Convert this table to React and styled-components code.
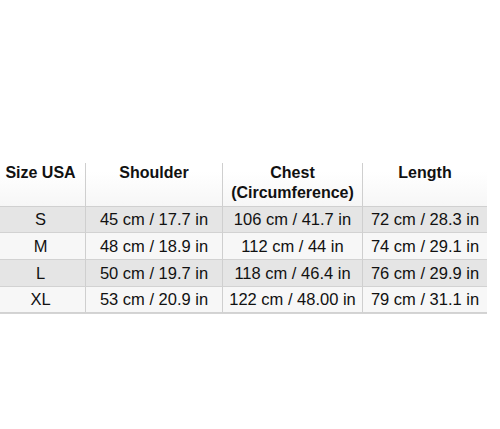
import React from 'react'
import styled, { createGlobalStyle } from 'styled-components'

const Global = createGlobalStyle`
body{
  margin: 0;
  background: #fff;
  font-family: "Liberation Sans", Arial, sans-serif;
}
`

const Page = styled.div`
width: 500px;
height: 429px;
overflow: hidden;
background: #fff;
padding-top: 163px;
box-sizing: border-box;
`

const Table = styled.div`
display: grid;
grid-template-columns: 89px 137px 140px 125px;
margin-left: -4px;
color: #111;
border-bottom: 1px solid #d4d4d4;
width: 491px;
`

const Head = styled.div`
height: 44px;
box-sizing: border-box;
text-align: center;
font-weight: bold;
font-size: 16px;
line-height: 20px;
background: linear-gradient(#fff 20%, #f6f6f6);
border-left: ${p => (p.first ? 'none' : '1px solid #cfcfcf')};
border-bottom: 1px solid #d0d0d0;
`

const Cell = styled.div`
height: ${p => p.h}px;
box-sizing: border-box;
display: flex;
align-items: center;
justify-content: center;
font-size: 16.5px;
white-space: nowrap;
background: ${p => (p.shade ? '#e5e5e5' : '#f7f7f7')};
border-left: ${p => (p.first ? 'none' : '1px solid #cfcfcf')};
border-bottom: 1px solid #d2d2d2;
`

const heads = ['Size USA', 'Shoulder', 'Chest\n(Circumference)', 'Length']

const rows = [
  ['S', '45 cm / 17.7 in', '106 cm / 41.7 in', '72 cm / 28.3 in'],
  ['M', '48 cm / 18.9 in', '112 cm / 44 in', '74 cm / 29.1 in'],
  ['L', '50 cm / 19.7 in', '118 cm / 46.4 in', '76 cm / 29.9 in'],
  ['XL', '53 cm / 20.9 in', '122 cm / 48.00 in', '79 cm / 31.1 in'],
]

const heights = [26, 27, 27, 26]

export default function App() {
  return (
    <Page>
      <Global />
      <Table>
        {heads.map((h, i) => (
          <Head key={h} first={i === 0}>
            {h.split('\n').map(t => <div key={t}>{t}</div>)}
          </Head>
        ))}
        {rows.map((r, ri) =>
          r.map((c, ci) => (
            <Cell key={ri + '-' + ci} first={ci === 0} shade={ri % 2 === 0} h={heights[ri]}>
              {c}
            </Cell>
          ))
        )}
      </Table>
    </Page>
  )
}
